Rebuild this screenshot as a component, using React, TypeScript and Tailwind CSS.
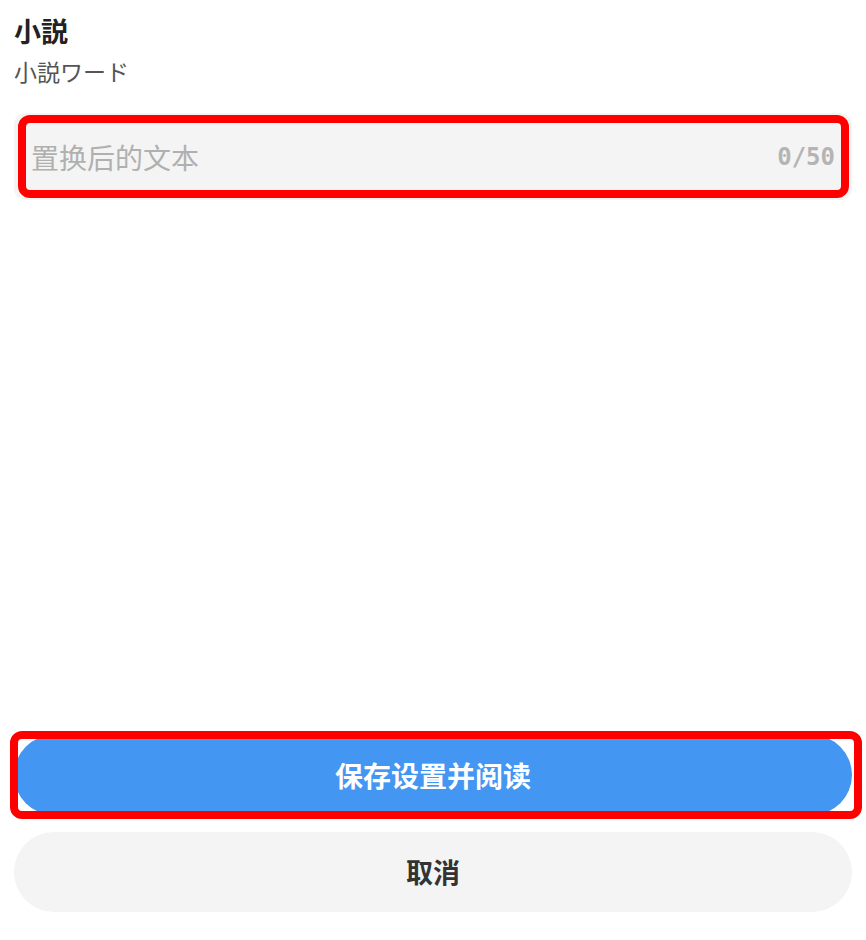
import React from 'react';

const cjk = { fontFamily: '"Noto Sans CJK SC", "Noto Sans CJK JP", sans-serif' };
const jp = { fontFamily: '"Noto Sans CJK JP", "Noto Sans CJK SC", sans-serif' };

const App: React.FC = () => {
  return (
    <div className="min-h-screen flex flex-col bg-white px-[14px] pb-[28px]" style={cjk}>
      <div className="pt-[14px]">
        <h1 className="text-[27px] leading-[34px] font-bold text-[#222]" style={jp}>小説</h1>
        <p className="mt-[8px] text-[23px] leading-[30px] text-[#555]" style={jp}>小説ワード</p>
      </div>

      <div className="relative mt-[27px] h-[87px] rounded-[12px] bg-[#f4f4f4] flex items-center justify-between pl-[17px] pr-[17px]">
        <span className="text-[28px] text-[#b0b0b0]">置换后的文本</span>
        <span className="text-[24px] font-bold text-[#b4b4b4]" style={{ fontFamily: '"DejaVu Sans Mono", monospace' }}>0/50</span>
        <div className="absolute left-[4px] right-[3px] top-[2px] bottom-[2px] rounded-[12px] border-[8px] border-[#ff0000] pointer-events-none" />
      </div>

      <div className="flex-1" />

      <div className="relative">
        <button className="w-full h-[80px] rounded-full bg-[#4396f1] text-white text-[28px] font-bold">
          保存设置并阅读
        </button>
        <div className="absolute -left-[4px] -right-[10px] -top-[4px] -bottom-[4px] rounded-[12px] border-[8px] border-[#ff0000] pointer-events-none" />
      </div>

      <button className="mt-[17px] w-full h-[80px] rounded-full bg-[#f4f4f4] text-[#333] text-[27px] font-bold">
        取消
      </button>
    </div>
  );
};

export default App;
